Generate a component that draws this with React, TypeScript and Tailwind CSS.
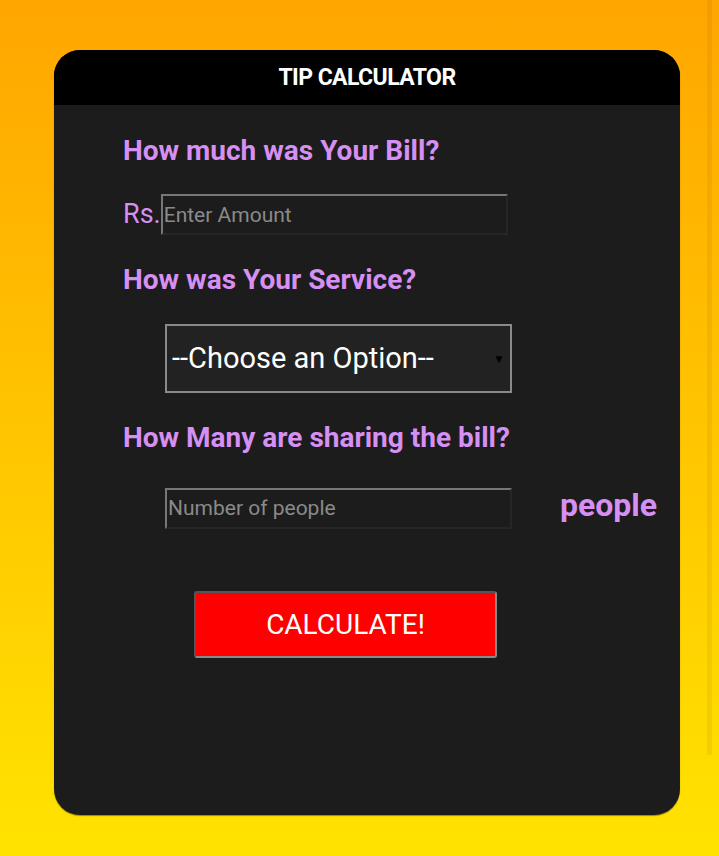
export default function App() {
  return (
    <div className="relative min-h-[856px] w-full bg-gradient-to-b from-[#ffa600] to-[#ffe300] pt-[50px] font-['Roboto',sans-serif]">
      {/* faint scrollbar track at right */}
      <div className="absolute right-[7px] top-0 h-[755px] w-[5px] bg-black/5" />
      <div className="ml-[54px] flex h-[765px] w-[626px] flex-col overflow-hidden rounded-[26px] bg-[#1c1c1c] shadow-[0_1px_1px_rgba(0,0,0,0.4)]">
        <div className="flex h-[55px] items-center justify-center bg-black pt-[2px]">
          <h1 className="text-[23px] font-bold tracking-tight text-white">TIP CALCULATOR</h1>
        </div>

        <div className="flex flex-col pl-[69px] pt-[31px]">
          <p className="text-[28px] leading-[30px] font-bold text-[#d68ff2]">How much was Your Bill?</p>
          <div className="mt-[28px] flex items-center">
            <span className="text-[27px] leading-none text-[#d68ff2]">Rs.</span>
            <input
              type="text"
              placeholder="Enter Amount"
              className="h-[41px] w-[347px] border-2 border-t-[#777] border-l-[#777] border-b-[#262626] border-r-[#262626] bg-[#1c1c1c] px-[1px] text-[21px] text-white outline-none placeholder:text-[#8a8a8a]"
            />
          </div>

          <p className="mt-[30px] text-[28px] leading-[30px] font-bold text-[#d68ff2]">How was Your Service?</p>
          <div className="mt-[29px] ml-[42px] flex h-[69px] w-[347px] items-center justify-between border-2 border-[#8a8a8a] bg-[#222] pr-[5px] pl-[5px]">
            <span className="text-[29px] text-white">--Choose an Option--</span>
            <span className="text-[12px] text-black">▼</span>
          </div>

          <p className="mt-[30px] text-[28px] leading-[30px] font-bold text-[#d68ff2]">How Many are sharing the bill?</p>
          <div className="mt-[34px] ml-[42px] flex items-center">
            <input
              type="text"
              placeholder="Number of people"
              className="h-[41px] w-[347px] border-2 border-t-[#777] border-l-[#777] border-b-[#262626] border-r-[#262626] bg-[#1c1c1c] px-[1px] text-[21px] text-white outline-none placeholder:text-[#8a8a8a]"
            />
            <span className="ml-[48px] -mt-[6px] text-[32px] font-bold text-[#d68ff2]">people</span>
          </div>

          <div className="mt-[62px] ml-[71px]">
            <button className="h-[67px] w-[303px] rounded-[3px] border-2 border-[#8a8a8a] border-t-[#555] border-l-[#555] bg-[#ff0000] text-[28px] text-white">
              CALCULATE!
            </button>
          </div>
        </div>
      </div>
    </div>
  );
}
